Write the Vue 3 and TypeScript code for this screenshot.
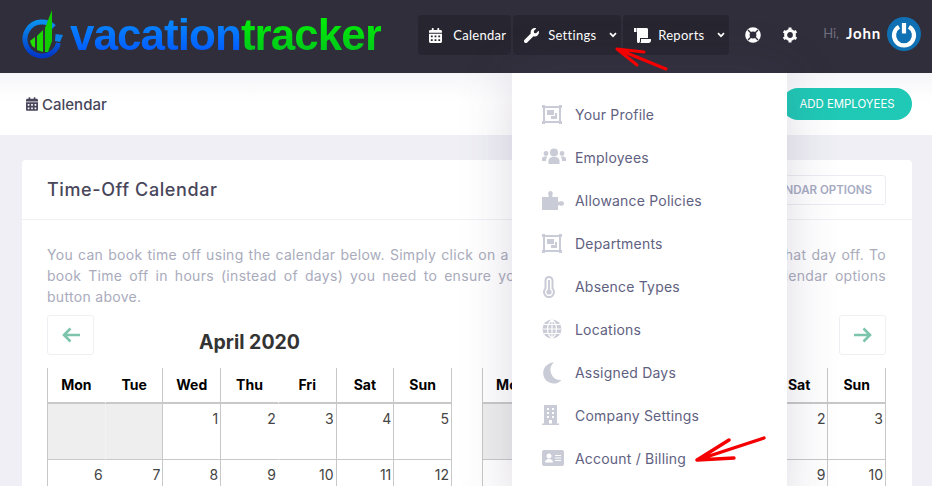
<template>
  <div class="page">
    <header class="topbar">
      <div class="logo">
        <svg class="logo-mark" width="44" height="50" viewBox="0 0 44 50">
          <defs>
            <linearGradient id="ring" x1="0" y1="0" x2="0" y2="1">
              <stop offset="0" stop-color="#0a8ff0" />
              <stop offset="1" stop-color="#0038c8" />
            </linearGradient>
          </defs>
          <path d="M32 17 A17 17 0 1 0 36.5 33" fill="none" stroke="url(#ring)" stroke-width="5" />
          <path d="M33.5 24 L41 25 L38 32 L33 31 Z" fill="#0a7fe8" />
          <path d="M8 31 L13 27 L13 38 L10 36 Z" fill="#22e000" />
          <path d="M15 26 L21 20 L21 42 L15 40 Z" fill="#18d800" />
          <path d="M23 18 L30 0 L30 31 L26 42 L23 42 Z" fill="#10cc00" />
        </svg>
        <span class="logo-text"><span class="blue">vacation</span><span class="green">tracker</span></span>
      </div>
      <nav class="nav">
        <a class="nav-item cal">
          <svg class="nav-ico" width="13" height="15" viewBox="0 0 448 512"><path fill="#fff" :d="calendarPath" /></svg>
          <span>Calendar</span>
        </a>
        <a class="nav-item set">
          <svg class="nav-ico" width="15" height="15" viewBox="0 0 512 512"><path fill="#fff" d="M507.73 109.1c-2.24-9.03-13.54-12.09-20.12-5.51l-74.36 74.36-67.88-11.31-11.31-67.88 74.36-74.36c6.62-6.62 3.43-17.9-5.66-20.16-47.38-11.74-99.55.91-136.58 37.93-39.64 39.64-50.55 97.1-34.05 147.2L18.74 402.76c-24.99 24.99-24.99 65.51 0 90.5 24.99 24.99 65.51 24.99 90.5 0l213.21-213.21c50.12 16.71 107.47 5.68 147.37-34.22 37.07-37.07 49.7-89.32 37.91-136.73z" /></svg>
          <span>Settings</span>
          <svg class="chev" width="8" height="6" viewBox="0 0 8 6"><path d="M1 1.2 L4 4.2 L7 1.2" fill="none" stroke="#fff" stroke-width="1.7" /></svg>
        </a>
        <a class="nav-item rep">
          <svg class="nav-ico" width="17" height="15" viewBox="0 0 17 15"><path fill="#fff" d="M0 0h2.500v4H0zM3 0h9.500c1 0 1.500.7 1.500 1.600V10H6v3.200c0 1-.8 1.800-1.800 1.800S3 14 3 13zM7 11h10v1.500c0 1.400-1 2.500-2.400 2.500H6.200c.5-.5.8-1.100.8-1.800z" /></svg>
          <span>Reports</span>
          <svg class="chev" width="8" height="6" viewBox="0 0 8 6"><path d="M1 1.2 L4 4.2 L7 1.2" fill="none" stroke="#fff" stroke-width="1.7" /></svg>
        </a>
        <svg class="tool-ico ring-ico" width="16" height="16" viewBox="0 0 16 16">
          <circle cx="8" cy="8" r="5.600" fill="none" stroke="#fff" stroke-width="4.400" />
          <path d="M3 3l3 3M13 3l-3 3M3 13l3-3M13 13l-3-3" stroke="#2f2d3a" stroke-width="1.400" />
        </svg>
        <svg class="tool-ico gear-ico" width="16" height="16" viewBox="0 0 16 16">
          <circle cx="8" cy="8" r="4.400" fill="none" stroke="#fff" stroke-width="3" />
          <path d="M8 .6v3M8 12.400v3M1.600 4.300l2.600 1.500M11.800 10.200l2.600 1.500M1.600 11.700l2.600-1.500M11.800 5.800l2.600-1.500" stroke="#fff" stroke-width="3" />
        </svg>
        <span class="hi">Hi,</span>
        <span class="name">John</span>
        <span class="avatar">
          <svg width="34" height="34" viewBox="0 0 34 34">
            <circle cx="17" cy="17" r="17" fill="#0f70b3" />
            <path d="M12 9.800 A10 10 0 1 0 22 9.800" fill="none" stroke="#fff" stroke-width="4.200" />
            <path d="M17 6v10.500" stroke="#fff" stroke-width="4.200" />
          </svg>
        </span>
      </nav>
    </header>

    <div class="subheader">
      <div class="crumb">
        <svg width="12" height="14" viewBox="0 0 448 512"><path fill="#48465b" :d="calendarPath" /></svg>
        <span>Calendar</span>
      </div>
      <button class="add-btn">ADD EMPLOYEES</button>
    </div>

    <main class="content">
      <section class="card">
        <div class="card-head">
          <h3>Time-Off Calendar</h3>
          <button class="options-btn">CALENDAR OPTIONS</button>
        </div>
        <div class="card-body">
          <p class="intro">
            <span class="fill">You can book time off using the calendar below. Simply click on a day you want booked and it will mark that day off. To</span>
            <span class="fill">book Time off in hours (instead of days) you need to ensure you first enable half days within the calendar options</span>
            <span>button above.</span>
          </p>
          <div class="arrows">
            <button class="arrow-btn">
              <svg width="18" height="16" viewBox="0 0 18 16"><path d="M8.500 1.500 L2 8 L8.500 14.500 M2.500 8 H18" fill="none" stroke="#7cc4ab" stroke-width="2.600" /></svg>
            </button>
            <button class="arrow-btn">
              <svg width="18" height="16" viewBox="0 0 18 16"><path d="M9.500 1.500 L16 8 L9.500 14.500 M15.500 8 H0" fill="none" stroke="#7cc4ab" stroke-width="2.600" /></svg>
            </button>
          </div>
          <div class="months">
            <div v-for="m in months" :key="m.title" class="month">
              <h4>{{ m.title }}</h4>
              <div class="grid">
                <div v-for="(d, i) in weekdays" :key="d" class="head-cell" :class="{ open: i === 0 || i === 3 }">{{ d }}</div>
                <div
                  v-for="(c, i) in cells(m)"
                  :key="i"
                  class="day"
                  :class="{ blank: !c, open: i % 7 === 0 || i % 7 === 3 }"
                >{{ c }}</div>
              </div>
            </div>
          </div>
        </div>
      </section>
    </main>

    <div class="dropdown">
      <a v-for="item in menu" :key="item.label" class="menu-item">
        <svg width="24" height="22" viewBox="0 0 24 22" class="menu-ico" v-html="item.icon"></svg>
        <span>{{ item.label }}</span>
      </a>
    </div>

    <svg class="red-arrow one" width="56" height="28" viewBox="0 0 56 28">
      <path d="M3 3 L52 23 M3 3 L30 6 M3 3 L23 19" fill="none" stroke="#f40000" stroke-width="3" stroke-linecap="round" />
    </svg>
    <svg class="red-arrow two" width="76" height="32" viewBox="0 0 76 32">
      <path d="M4 26 L71 4 M4 26 L36 6 M4 26 L41 24" fill="none" stroke="#f40000" stroke-width="3.400" stroke-linecap="round" />
    </svg>
  </div>
</template>

<script setup lang="ts">
interface Month {
  title: string
  offset: number
  days: number
}

const calendarPath =
  'M0 464c0 26.5 21.5 48 48 48h352c26.5 0 48-21.5 48-48V192H0v272zm320-196c0-6.6 5.4-12 12-12h40c6.6 0 12 5.4 12 12v40c0 6.6-5.4 12-12 12h-40c-6.6 0-12-5.4-12-12v-40zm0 128c0-6.6 5.4-12 12-12h40c6.6 0 12 5.4 12 12v40c0 6.6-5.4 12-12 12h-40c-6.6 0-12-5.4-12-12v-40zM192 268c0-6.6 5.4-12 12-12h40c6.6 0 12 5.4 12 12v40c0 6.6-5.4 12-12 12h-40c-6.6 0-12-5.4-12-12v-40zm0 128c0-6.6 5.4-12 12-12h40c6.6 0 12 5.4 12 12v40c0 6.6-5.4 12-12 12h-40c-6.6 0-12-5.4-12-12v-40zM64 268c0-6.6 5.4-12 12-12h40c6.6 0 12 5.4 12 12v40c0 6.6-5.4 12-12 12H76c-6.6 0-12-5.4-12-12v-40zm0 128c0-6.6 5.4-12 12-12h40c6.6 0 12 5.4 12 12v40c0 6.6-5.4 12-12 12H76c-6.6 0-12-5.4-12-12v-40zM400 64h-48V16c0-8.8-7.2-16-16-16h-32c-8.8 0-16 7.2-16 16v48H160V16c0-8.8-7.2-16-16-16h-32c-8.8 0-16 7.2-16 16v48H48C21.5 64 0 85.5 0 112v48h448v-48c0-26.5-21.5-48-48-48z'

const weekdays = ['Mon', 'Tue', 'Wed', 'Thu', 'Fri', 'Sat', 'Sun']

const months: Month[] = [
  { title: 'April 2020', offset: 2, days: 30 },
  { title: 'May 2020', offset: 4, days: 31 }
]

// leading blanks, then the day numbers
const cells = (m: Month) => {
  const out: (number | null)[] = Array(m.offset).fill(null)
  for (let d = 1; d <= m.days; d++) out.push(d)
  return out
}

const fill = 'fill="#c9cbd6"'
const objectIcon = `<path ${fill} fill-rule="evenodd" d="M0 1h3v1h14V1h3v3h-1v13h1v3h-3v-1H3v1H0v-3h1V4H0zM3 4v13h14V4zM5 6h7v5H5zM9 12h4V9h2v6H9z"/>`

const menu = [
  { label: 'Your Profile', icon: objectIcon },
  {
    label: 'Employees',
    icon: `<g ${fill}><circle cx="12" cy="5.500" r="4"/><circle cx="4" cy="6.500" r="2.400"/><circle cx="20" cy="6.500" r="2.400"/><path d="M6.500 17v-3c0-2.500 2-4 4-4h3c2 0 4 1.500 4 4v3z"/><path d="M0 14v-2c0-1.500 1-2.500 2.500-2.500h3c-1 1-1.500 2.500-1.500 4.500zM24 14v-2c0-1.500-1-2.500-2.500-2.500h-3c1 1 1.500 2.500 1.500 4.500z"/></g>`
  },
  {
    label: 'Allowance Policies',
    icon: `<path ${fill} d="M0 7h6c1 0 1-1 .5-2C6 4 6 1 8.500 1S11 4 10.500 5c-.5 1-.5 2 .5 2h5v4c0 1 1 1 2 .5s4-.5 4 2-3 2.500-4 2-2-.5-2 .5v4H0z"/>`
  },
  { label: 'Departments', icon: objectIcon },
  {
    label: 'Absence Types',
    icon: `<path fill="none" stroke="#c9cbd6" stroke-width="2" d="M3.500 12V4a3.500 3.500 0 0 1 7 0v8a5 5 0 1 1-7 0z" transform="translate(0 .5)"/><path ${fill} d="M6 4h2v10H6z"/><circle ${fill} cx="7" cy="16" r="2.600"/>`
  },
  {
    label: 'Locations',
    icon: `<circle ${fill} cx="10" cy="10" r="9.500"/><path fill="none" stroke="#fff" stroke-width="1.200" d="M10 .5v19M.5 10h19M1.800 5.500h16.400M1.800 14.500h16.400M10 .5c-6 5-6 14 0 19M10 .5c6 5 6 14 0 19"/>`
  },
  {
    label: 'Assigned Days',
    icon: `<path ${fill} d="M12 0A10.500 10.500 0 1 0 19.500 17.500 10 10 0 0 1 12 0z" transform="translate(0 .5)"/>`
  },
  {
    label: 'Company Settings',
    icon: `<path ${fill} fill-rule="evenodd" d="M2 0h13v18.500h2V20H0v-1.500h2zM5 3v2h2V3zM10 3v2h2V3zM5 7v2h2V7zM10 7v2h2V7zM5 11v2h2v-2zM10 11v2h2v-2zM7 15v3.500h3V15z"/>`
  },
  {
    label: 'Account / Billing',
    icon: `<path ${fill} fill-rule="evenodd" d="M2 2h18a2 2 0 0 1 2 2v12a2 2 0 0 1-2 2H2a2 2 0 0 1-2-2V4a2 2 0 0 1 2-2zM7 5.500a2.500 2.500 0 1 0 .01 0zM3 14.500h8c0-2-1.500-3.500-4-3.500s-4 1.500-4 3.500zM13 7v1h6V7zM13 9.500v1h6v-1zM13 12v1h6v-1z"/>`
  }
]
</script>

<style>
html,
body {
  margin: 0;
  height: 486px;
  overflow: hidden;
  background: #f0f0f6;
}
</style>

<style scoped>
.page {
  position: relative;
  height: 486px;
  overflow: hidden;
  font-family: Inter, 'Open Sans', sans-serif;
  background: #efeff5;
}

.topbar {
  height: 73px;
  background: #302e3b;
  display: flex;
  justify-content: space-between;
  box-sizing: border-box;
  padding: 15px 11px 0 22px;
}

.logo {
  display: flex;
  align-items: flex-start;
  margin-top: -5px;
}

.logo-text {
  font-family: 'Liberation Sans', Arial, sans-serif;
  font-weight: 700;
  font-size: 44px;
  line-height: 48px;
  letter-spacing: -.95px;
  margin-left: 4px;
  margin-top: 1px;
}

.blue {
  background: linear-gradient(#0a98ff, #0050ff);
  -webkit-background-clip: text;
  background-clip: text;
  color: transparent;
}

.green {
  background: linear-gradient(#00f800, #00c020);
  -webkit-background-clip: text;
  background-clip: text;
  color: transparent;
}

.nav {
  display: flex;
  align-items: flex-start;
  font-family: Lato, sans-serif;
  color: #fff;
  font-size: 13px;
}

.nav-item {
  height: 40px;
  box-sizing: border-box;
  background: #272630;
  border-radius: 4px;
  display: flex;
  align-items: center;
  padding-left: 11px;
  margin-right: 2px;
  letter-spacing: .3px;
}

.nav-item.cal { width: 93px; }
.nav-item.set { width: 108px; }
.nav-item.rep { width: 106px; }

.nav-ico { margin-right: 11px; flex: none; }
.set .nav-ico { margin-right: 9px; }
.rep .nav-ico { margin-right: 7px; }
.chev { margin-left: auto; margin-right: 4px; }

.tool-ico { margin-top: 12px; }
.ring-ico { margin-left: 14px; }
.gear-ico { margin-left: 21px; }

.hi {
  margin: 10px 0 0 25px;
  color: #6f6d7e;
  font-size: 13px;
}

.name {
  margin: 9px 0 0 7px;
  font-size: 15px;
  letter-spacing: .8px;
  font-weight: 700;
}

.avatar {
  margin: 2px 0 0 6px;
}

.subheader {
  height: 62px;
  background: linear-gradient(#f6f6f9, #fff 28px);
  display: flex;
  justify-content: space-between;
  align-items: center;
  padding: 0 20px 0 26px;
}

.crumb {
  display: flex;
  align-items: center;
  gap: 4px;
  font-size: 15px;
  font-weight: 500;
  color: #48465b;
}

.add-btn {
  width: 130px;
  height: 32px;
  border: 0;
  border-radius: 16px;
  background: #1fc9b6;
  color: #fff;
  font-family: inherit;
  font-size: 11.400px;
  padding: 0;
}

.content {
  padding: 25px 20px 0 22px;
}

.card {
  background: #fff;
  border-radius: 4px;
}

.card-head {
  height: 60px;
  box-sizing: border-box;
  border-bottom: 1px solid #f0f0f5;
  padding: 15px 26px 0 25px;
  display: flex;
  justify-content: space-between;
  align-items: flex-start;
}

.card-head h3 {
  margin: 0;
  font-size: 18px;
  line-height: 30px;
  font-weight: 500;
  letter-spacing: .6px;
  color: #48465b;
}

.options-btn {
  height: 30px;
  width: 170px;
  background: #fff;
  border: 1px solid #ebedf2;
  border-radius: 3px;
  color: #a7abc3;
  font-family: inherit;
  font-size: 11.500px;
  font-weight: 600;
  text-align: right;
  padding-right: 13px;
}

.card-body {
  padding: 24px 26px 0 25px;
}

.intro {
  margin: 0;
  font-size: 14px;
  line-height: 21px;
  letter-spacing: .3px;
  color: #a9abbc;
}

.intro span {
  display: block;
}

.intro .fill {
  text-align: justify;
  text-align-last: justify;
}

.arrows {
  display: flex;
  justify-content: space-between;
  margin-top: 8px;
  margin-bottom: -26px;
}

.arrow-btn {
  width: 47px;
  height: 40px;
  background: #fff;
  border: 1px solid #edeff3;
  border-radius: 3px;
  padding: 0;
  display: flex;
  align-items: center;
  justify-content: center;
}

.months {
  display: grid;
  grid-template-columns: 405px 404px;
  column-gap: 30px;
}

.month h4 {
  margin: 0;
  height: 39px;
  font-size: 19.500px;
  line-height: 27px;
  font-weight: 700;
  color: #333;
  text-align: center;
}

.grid {
  display: grid;
  grid-template-columns: repeat(7, 1fr);
  border-left: 1px solid #c8c8c8;
}

.head-cell {
  height: 34px;
  border-right: 1px solid #c8c8c8;
  border-bottom: 2px solid #c8c8c8;
  font-size: 14px;
  font-weight: 700;
  color: #000;
  text-align: center;
  line-height: 34px;
}

.day {
  height: 49px;
  border-right: 1px solid #c8c8c8;
  border-bottom: 1px solid #c8c8c8;
  font-size: 14px;
  color: #444;
  text-align: right;
  padding: 6px 2px 0 0;
}

.open {
  border-right-color: transparent;
}

.blank {
  background: #eee;
}

.blank.open {
  border-right-color: #f2f2f2;
}

.dropdown {
  position: absolute;
  left: 512px;
  top: 73px;
  width: 275px;
  height: 440px;
  background: #fff;
  box-shadow: 0 0 50px 0 rgba(82, 63, 105, .2);
  box-sizing: border-box;
  padding-top: 20px;
}

.menu-item {
  height: 43px;
  display: flex;
  align-items: center;
  padding-left: 30px;
  font-size: 14px;
  letter-spacing: .2px;
  color: #5f6181;
}

.menu-ico {
  margin-right: 9px;
  flex: none;
}

.red-arrow {
  position: absolute;
}

.red-arrow.one {
  left: 614px;
  top: 46px;
}

.red-arrow.two {
  left: 693px;
  top: 434px;
}
</style>
